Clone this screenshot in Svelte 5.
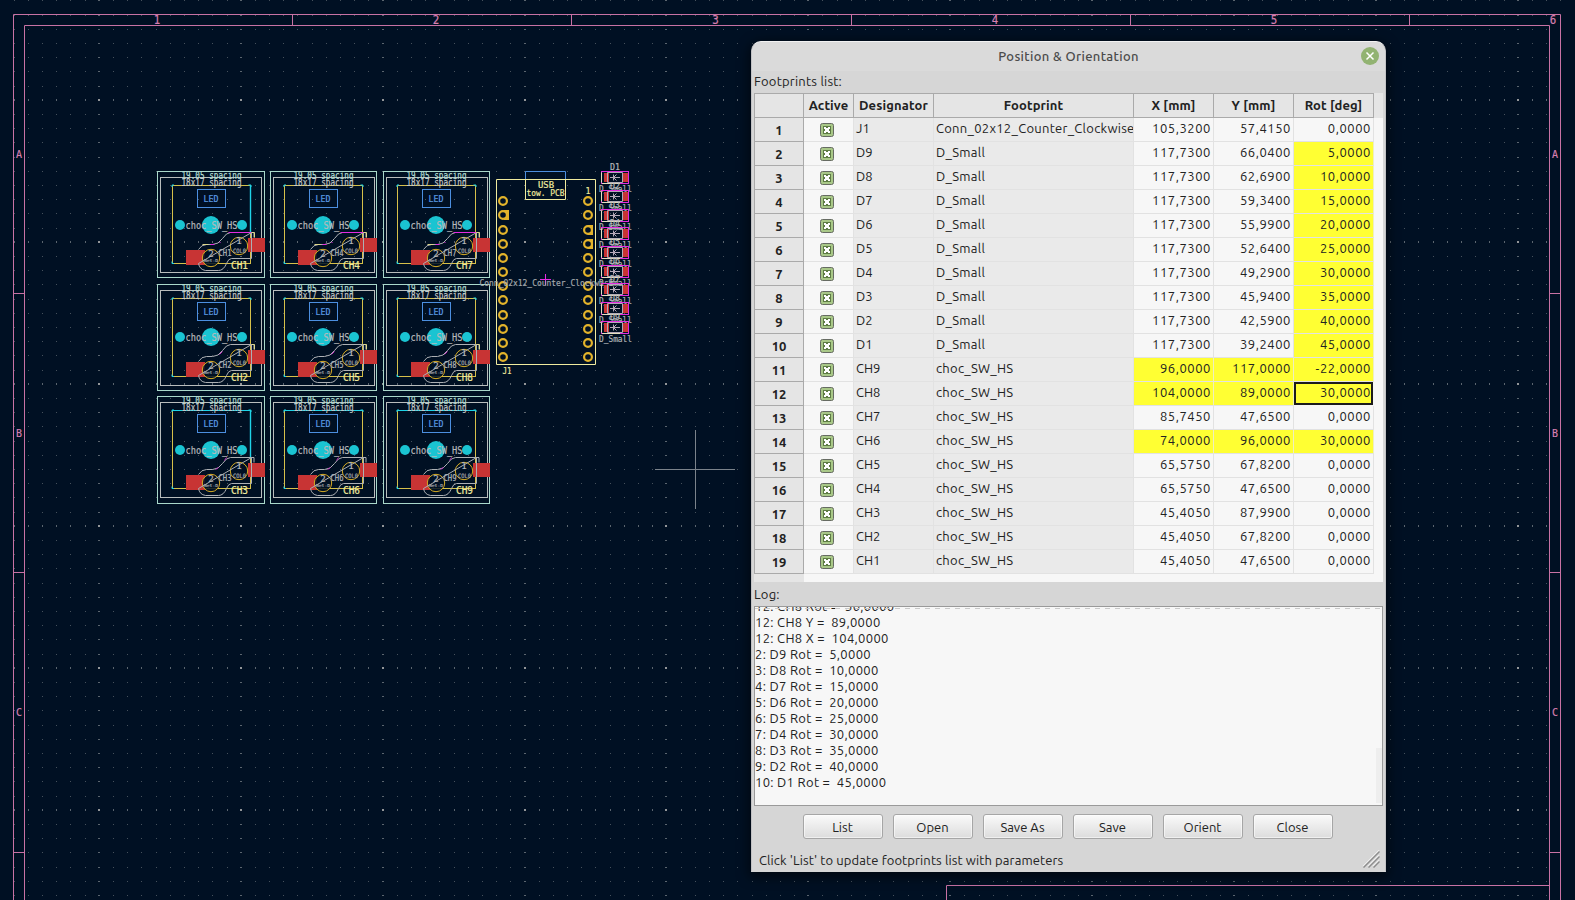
<script>
  const cols = Array.from({ length: 112 }, (_, i) => ({ p: Math.round(98.8 + (i - 7) * 14.19), major: (i - 7) % 10 === 0 }));
  const lines = Array.from({ length: 64 }, (_, i) => ({ p: Math.round(99.8 + (i - 7) * 14.2), major: (i - 7) % 10 === 0 }));
  const path = (list) => list.join('');
  const minorDots = path(lines.filter((l) => !l.major).flatMap((l) => cols.filter((c) => !c.major).map((c) => `M${c.p} ${l.p}h1v1h-1z`)));
  const majorDots = path([
    ...lines.filter((l) => !l.major).flatMap((l) => cols.filter((c) => c.major).map((c) => `M${c.p - 1} ${l.p}h2v1h-2z`)),
    ...lines.filter((l) => l.major).flatMap((l) => cols.filter((c) => !c.major).map((c) => `M${c.p} ${l.p - 1}h1v2h-1z`))
  ]);
  const crossDots = path(lines.filter((l) => l.major).flatMap((l) => cols.filter((c) => c.major).map((c) => `M${c.p - 1} ${l.p - 1}h2v2h-2z`)));

  const tickX = [292.5, 571.5, 851.5, 1130.5, 1409.5];
  const tickY = [293.5, 572.5, 852.5];
  const numbers = [157, 436, 715.5, 995, 1274, 1553];
  const letters = [['A', 154], ['B', 433.5], ['C', 712.5]];

  const switches = [157.5, 270.5, 383.5].flatMap((x, c) =>
    [171.5, 284.5, 396.5].map((y, r) => ({ x, y, r, c, name: `CH${c * 3 + r + 1}` }))
  );
  const pinY = [201, 215, 230, 244, 258, 272, 286, 300, 315, 329, 343, 357];
  const diodes = [177.5, 196.5, 215.5, 233.5, 252.5, 271.5, 289.5, 308.5, 327.5];

  const head = ['', 'Active', 'Designator', 'Footprint', 'X [mm]', 'Y [mm]', 'Rot [deg]'];
  const rows = [
    ['J1', 'Conn_02x12_Counter_Clockwise', '105,3200', '57,4150', '0,0000', ''],
    ['D9', 'D_Small', '117,7300', '66,0400', '5,0000', 'r'],
    ['D8', 'D_Small', '117,7300', '62,6900', '10,0000', 'r'],
    ['D7', 'D_Small', '117,7300', '59,3400', '15,0000', 'r'],
    ['D6', 'D_Small', '117,7300', '55,9900', '20,0000', 'r'],
    ['D5', 'D_Small', '117,7300', '52,6400', '25,0000', 'r'],
    ['D4', 'D_Small', '117,7300', '49,2900', '30,0000', 'r'],
    ['D3', 'D_Small', '117,7300', '45,9400', '35,0000', 'r'],
    ['D2', 'D_Small', '117,7300', '42,5900', '40,0000', 'r'],
    ['D1', 'D_Small', '117,7300', '39,2400', '45,0000', 'r'],
    ['CH9', 'choc_SW_HS', '96,0000', '117,0000', '-22,0000', 'xyr'],
    ['CH8', 'choc_SW_HS', '104,0000', '89,0000', '30,0000', 'xyf'],
    ['CH7', 'choc_SW_HS', '85,7450', '47,6500', '0,0000', ''],
    ['CH6', 'choc_SW_HS', '74,0000', '96,0000', '30,0000', 'xyr'],
    ['CH5', 'choc_SW_HS', '65,5750', '67,8200', '0,0000', ''],
    ['CH4', 'choc_SW_HS', '65,5750', '47,6500', '0,0000', ''],
    ['CH3', 'choc_SW_HS', '45,4050', '87,9900', '0,0000', ''],
    ['CH2', 'choc_SW_HS', '45,4050', '67,8200', '0,0000', ''],
    ['CH1', 'choc_SW_HS', '45,4050', '47,6500', '0,0000', '']
  ];
  const log = [
    '12: CH8 Rot =  30,0000',
    '12: CH8 Y =  89,0000',
    '12: CH8 X =  104,0000',
    '2: D9 Rot =  5,0000',
    '3: D8 Rot =  10,0000',
    '4: D7 Rot =  15,0000',
    '5: D6 Rot =  20,0000',
    '6: D5 Rot =  25,0000',
    '7: D4 Rot =  30,0000',
    '8: D3 Rot =  35,0000',
    '9: D2 Rot =  40,0000',
    '10: D1 Rot =  45,0000'
  ];
  const buttons = ['List', 'Open', 'Save As', 'Save', 'Orient', 'Close'];
</script>

{#snippet label(x, y, w, size, fill, text)}
  <text {x} y={y + size * 0.365} font-size={size} textLength={w} lengthAdjust="spacingAndGlyphs" text-anchor="middle" {fill} stroke={fill} stroke-width=".2">{text}</text>
{/snippet}

<main>
  <svg class="board" width="1575" height="900" viewBox="0 0 1575 900" fill="none">
    <path d={minorDots} fill="#46515c" />
    <path d={majorDots} fill="#5b656f" />
    <path d={crossDots} fill="#939699" />

    <g stroke="#c872a4">
      <path d="M13.5 900V14.5H1560.5V900M24.5 900V25.5H1549.5V900M946.5 900V885.5H1549.5" />
      {#each tickX as x}<path d="M{x} 14v11" />{/each}
      {#each tickY as y}<path d="M13 {y}h11M1549 {y}h11" />{/each}
    </g>
    {#each numbers as x, i}{@render label(x, 20, 6.500, 12, '#d67fb0', String(i + 1))}{/each}
    {#each letters as [t, y]}
      {@render label(19, y, 6, 10.5, '#d67fb0', t)}
      {@render label(1555, y, 6, 10.5, '#d67fb0', t)}
    {/each}

    {#each switches as s}
      <g transform="translate({s.x} {s.y})">
        <rect width={s.c ? 106 : 107} height={s.r === 2 ? 107 : 106} stroke="#a9d8cb" />
        <rect x="3" y="6" width="101" height="95" stroke="#b9bdbd" />
        <g transform="translate({s.c ? -1 : 0} 0)">
          <rect x="15" y="14" width="78" height="78" stroke="#d6c04a" />
          {#if s.r === 2}<path d="M15 14H93" stroke="#1fd4e8" />{/if}
          {#if s.c === 0 && s.r !== 1}<path d="M93 14V62" stroke="#1fd4e8" stroke-width="1.4" />{/if}
          <path d="M14.5 15.5v-2h2M91 13.5h2.5v2M14.5 90v2h2" stroke="#1fd4e8" />
          <rect x="40" y="18" width="28" height="18" stroke="#4c8fe0" />
          {@render label(53.5, 27, 15, 9, '#5b9be6', 'LED')}
          {@render label(54, 4, 60, 9.6, '#b4dfd3', '19.05 spacing')}
          {@render label(54, 11, 60, 9.6, '#c4c8c8', '18x17 spacing')}
        </g>
        <g transform="translate({s.c ? -1 : 0} {s.r === 1 ? -1 : 0})">
          <path d="M28.5 78.5h19v15h-19zM90.5 66.500h17v14h-17z" fill="#c83434" />
          <g fill="#1ac4d2">
            <circle cx="22.500" cy="53.500" r="5" />
            <circle cx="53.500" cy="53.500" r="9" />
            <circle cx="84.500" cy="53.500" r="5" />
          </g>
          {@render label(54, 53.3, 52, 10.2, '#b8babc', 'choc_SW_HS')}
          <circle cx="81.500" cy="74.500" r="8.700" fill="#001023" fill-opacity=".85" stroke="#d9ae24" />
          <circle cx="53.500" cy="86.500" r="8.700" fill="#001023" fill-opacity=".85" stroke="#d9ae24" />
          <path d="M41 78Q44 73 49 73H55Q61 73 65 67Q69 61 73 61H96.500V66M94 61V87H74Q71 87 69 92Q66 99 61 99H48Q42 98 41 92Z" stroke="#adb0b4" />
          {#if s.r === 0}
            <path d="M71 61H94M53 73H57M62 71H63" stroke="#e32be0" />
            <path d="M94 61H97V66M45 73H51" stroke="#ddd68a" />
          {:else if s.r === 1}
            <path d="M62 71L65 68" stroke="#c02bc0" />
            <path d="M94 61H97V66" stroke="#ddd68a" />
          {:else}
            <path d="M58 73L61 71M69 61l-2 3" stroke="#c02bc0" />
          {/if}
          {@render label(81.5, 69.5, 5.5, 9, '#b4b6b8', '1')}
          {@render label(82, 79, 13, 6, '#a2a5a8', 'COL0')}
          {@render label(53.5, 82, 5.5, 9, '#b4b6b8', '2')}
          {@render label(53.5, 89, 14, 4, '#9a9da0', 'Net-D')}
          {@render label(67.5, 81.3, 13, 8, '#b4b6b8', s.name)}
          {@render label(82, 94.2, 17, 9.6, '#f0eb9e', s.name)}
        </g>
      </g>
    {/each}

    <path d="M525.500 179V171.500H565.500V179" stroke="#4c8fe0" />
    <path d="M496.500 179.500H595.500V364.500H496.500ZM525.500 179V199.500H565.500V179" stroke="#f0eb9e" />
    {@render label(546, 185, 16, 9, '#f0eb9e', 'USB')}
    {@render label(545.5, 193, 38, 9, '#f0eb9e', 'tow. PCB')}
    {@render label(588, 191, 5, 9, '#f0eb9e', '1')}
    {@render label(507, 370.5, 9, 9, '#f0eb9e', 'J1')}
    <g stroke="#e2b32b" stroke-width="2.200">
      {#each pinY as y, i}
        {#if i === 1}<path d="M504 {y - 4}H508V{y + 4}H504" stroke-width="2" />{/if}
        <circle cx="503" cy={y} r="3.900" />
        {#if i === 2 || i === 3}<path d="M588 {y - 4}H592V{y + 4}H588" stroke-width="2" />{/if}
        <circle cx="588" cy={y} r="3.900" />
      {/each}
    </g>
    <path d="M540 279.500H551M545.500 274V285" stroke="#e32be0" />
    {@render label(546.5, 282.8, 134, 9.5, '#a4a8ac', 'Conn_02x12_Counter_Clockwise')}

    {#each diodes as y, i}
      <path d="M604 {y - 4.500}h5v9h-5zM623 {y - 4.500}h5v9h-5z" fill="#c83434" />
      <rect x="601.500" y={y - 6} width="27" height="12" stroke="#e32be0" />
      <path d="M602 {y + 6}H620M601.500 {y - 5}V{y + 5}" stroke="#e6e0c0" />
      <path d="M607.500 {y - 5}H622.500V{y + 5}H607.500ZM610 {y}H620M613.500 {y - 3}V{y + 3}M616.500 {y - 3}L613.500 {y}L616.500 {y + 3}" stroke="#b4a8b8" />
      {@render label(615, y - 10.5, 10, 8.5, '#b4b6b8', `D${i + 1}`)}
      {@render label(615.5, y + 11.5, 33, 9, '#adb0b4', 'D_Small')}
    {/each}

    <path d="M655 469.500H735M695.500 430V509" stroke="#7b838b" />
  </svg>

  <section class="dialog">
    <header>
      <h1>Position &amp; Orientation</h1>
      <button class="x" aria-label="Close window">
        <svg width="18" height="18" viewBox="0 0 18 18"><circle cx="9" cy="9" r="9" fill="#92b372" /><path d="M5.500 5.500l7 7M12.500 5.500l-7 7" stroke="#fff" stroke-width="1.500" /></svg>
      </button>
    </header>
    <div class="caption list">Footprints list:</div>
    <div class="table">
      <div class="row head">
        {#each head as h}<div class="h"><span>{h}</span></div>{/each}
      </div>
      {#each rows as [id, fp, x, y, rot, mark], i}
        <div class="row">
          <div class="num">{i + 1}</div>
          <div class="check">
            <svg width="14" height="14" viewBox="0 0 14 14"><rect x=".5" y=".5" width="13" height="13" rx="2" fill="#a9c888" stroke="#666b62" /><rect x="3" y="3" width="8" height="8" fill="#5f7d45" /><rect x="4" y="4" width="6" height="6" fill="#fff" /><path d="M6 4h2v1H6zM6 9h2v1H6zM4 6h1v2H4zM9 6h1v2H9z" fill="#5f7d45" /></svg>
          </div>
          <div class="ro">{id}</div>
          <div class="ro" class:wide={fp !== 'D_Small'}>{fp}</div>
          <div class="val" class:hot={mark.includes('x')}>{x}</div>
          <div class="val" class:hot={mark.includes('y')}>{y}</div>
          <div class="val" class:hot={mark.includes('r') || mark.includes('f')} class:focus={mark.includes('f')}>{rot}</div>
        </div>
      {/each}
      <div class="row tail"><div></div></div>
    </div>
    <div class="caption logcap">Log:</div>
    <div class="log">
      <div class="lines">
        {#each log as l}<p>{l}</p>{/each}
      </div>
      <i class="dash"></i>
      <i class="thumb"></i>
    </div>
    <div class="buttons">
      {#each buttons as b}<button>{b}</button>{/each}
    </div>
    <footer>
      <span>Click 'List' to update footprints list with parameters</span>
      <svg width="18" height="18" viewBox="0 0 18 18" fill="none"><path d="M2 17.500L18 1.500M7 17.500L18 6.500M12 17.500L18 11.500" stroke="#f4f4f4" stroke-width="1.200" transform="translate(-1 -1)" /><path d="M1.500 17.500L17.500 1.500M6.500 17.500L17.500 6.500M11.500 17.500L17.500 11.500" stroke="#8d8d8d" stroke-width="1.500" /></svg>
    </footer>
  </section>
</main>

<style>
  :global(body) { overflow: hidden; background: #001023; }
  main { position: relative; width: 1575px; height: 900px; background: #001023; overflow: hidden; font: 13px/16px Ubuntu, "Noto Sans", sans-serif; color: #222; }
  .board { display: block; font-family: "DejaVu Sans Mono", monospace; }
  .dialog { position: absolute; left: 751px; top: 41px; width: 635px; height: 831px; box-sizing: border-box; border: 1px solid #c2c2c4; border-top-color: #f2f2f2; border-bottom-color: #d6d6d6; border-radius: 10px 10px 0 0; background: #d6d6d6; box-shadow: 0 3px 12px 2px rgba(0, 0, 0, .55); padding: 0 2px; display: flex; flex-direction: column; }
  header { height: 29px; flex: none; box-sizing: border-box; padding-bottom: 2px; margin: 0 -2px; display: grid; grid-template-columns: 1fr auto 1fr; align-items: center; background: #dadada; border-radius: 9px 9px 0 0; }
  h1 { grid-column: 2; margin: 0; font-size: 13px; font-weight: 500; letter-spacing: .36px; color: #4b4b4b; }
  .x { justify-self: end; margin: 0 6px 0 0; padding: 0; border: 0; background: none; display: flex; }
  .caption { flex: none; letter-spacing: .22px; }
  .list { height: 22px; line-height: 21px; }
  .table { flex: none; height: 489px; width: 629px; background: #f7f7f7; overflow: hidden; display: flex; flex-direction: column; }
  .row { display: grid; grid-template-columns: 50px 50px 80px 200px 80px 80px 80px; height: 24px; flex: none; }
  .row > div { box-sizing: border-box; border-right: 1px solid #e2e2e2; border-bottom: 1px solid #e2e2e2; overflow: hidden; white-space: nowrap; line-height: 21px; }
  .row.head { height: 25px; background: #e5e5e5; }
  .row > .h { border-top: 1px solid #aaa; border-right: 1px solid #aaa; border-bottom: 1px solid #aaa; text-align: center; font-weight: 700; font-size: 13px; letter-spacing: .14px; line-height: 22px; background: #e5e5e5; }
  .row > .h:first-child, .row > .num { border-left: 1px solid #aaa; }
  .row > .num { border-right-color: #aaa; border-bottom-color: #aaa; background: #e5e5e5; text-align: center; font-weight: 700; line-height: 25px; font-size: 13px; }
  .check { display: flex; align-items: center; justify-content: center; padding-right: 3px; }
  .row .ro { background: #eaeaea; padding-left: 2px; letter-spacing: 0; }
  .row .ro + .ro { letter-spacing: .3px; }
  .row .ro.wide { letter-spacing: .28px; }
  .row .val { text-align: right; padding-right: 2px; letter-spacing: .56px; }
  .row .hot { background: #ffff33; border-right-color: #eeeec0; }
  .row .focus { border: 2px solid #1c1c1c; line-height: 17px; margin: 0 1px 1px 0; padding-right: 0; }
  .row.tail { height: 8px; }
  .row.tail > div { background: #e5e5e5; border: 0; }
  .logcap { height: 24px; line-height: 25px; }
  .log { position: relative; flex: none; height: 200px; box-sizing: border-box; border: 1px solid #9a9a9a; background: #f7f7f7; overflow: hidden; }
  .lines { margin-top: -9px; }
  .log p { margin: 0; white-space: pre; letter-spacing: .32px; height: 16px; }
  .dash { position: absolute; left: 0; right: 0; top: 1px; height: 1px; background: repeating-linear-gradient(90deg, #c9c9c9 0 5px, transparent 5px 10px); }
  .thumb { position: absolute; right: 0; bottom: 2px; width: 6px; height: 55px; background: #eee; }
  .buttons { flex: none; display: flex; gap: 10px; justify-content: center; padding: 8px 2px 0 0; height: 25px; }
  .buttons button { width: 80px; height: 25px; padding: 0; border: 1px solid #a6a6a6; border-radius: 3px; background: linear-gradient(#fafafa, #dcdcdc); box-shadow: inset 0 0 0 1px rgba(255, 255, 255, .55); font: inherit; line-height: 22px; color: #222; }
  footer { flex: 1; display: flex; justify-content: space-between; align-items: flex-end; padding: 0 3px 3px 5px; }
  footer span { line-height: 16px; letter-spacing: .11px; }
</style>
